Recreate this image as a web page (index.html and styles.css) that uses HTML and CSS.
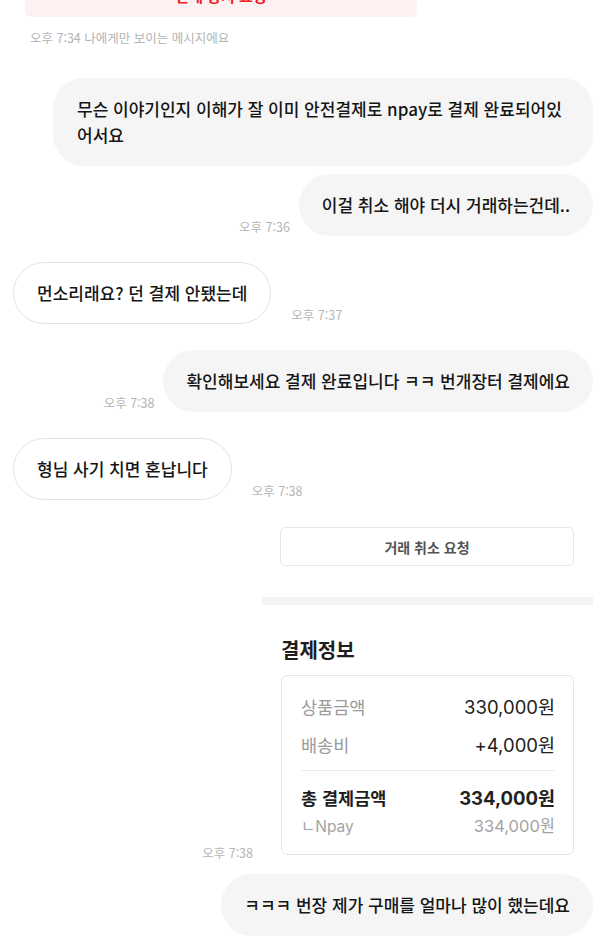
FILE: index.html
```html
<!DOCTYPE html>
<html lang="ko">
<head>
<meta charset="utf-8">
<title>채팅</title>
<link rel="stylesheet" href="styles.css">
</head>
<body>
<div class="chat">
  <div class="notice">
    <div class="notice-box"><p class="notice-text">판매 중지 요청</p></div>
    <div class="notice-meta">오후 7:34 나에게만 보이는 메시지에요</div>
  </div>

  <div class="row me first">
    <div class="bubble me-bubble wide">무슨 이야기인지 이해가 잘 이미 안전결제로 npay로 결제 완료되어있어서요</div>
  </div>

  <div class="row me same">
    <span class="time">오후 7:36</span>
    <div class="bubble me-bubble">이걸 취소 해야 더시 거래하는건데..</div>
  </div>

  <div class="row you">
    <div class="bubble you-bubble">먼소리래요? 던 결제 안됐는데</div>
    <span class="time">오후 7:37</span>
  </div>

  <div class="row me">
    <span class="time">오후 7:38</span>
    <div class="bubble me-bubble">확인해보세요 결제 완료입니다 ㅋㅋ 번개장터 결제에요</div>
  </div>

  <div class="row you">
    <div class="bubble you-bubble">형님 사기 치면 혼납니다</div>
    <span class="time">오후 7:38</span>
  </div>

  <div class="row me pay-row">
    <span class="time">오후 7:38</span>
    <div class="pay">
      <button class="cancel-btn" type="button">거래 취소 요청</button>
      <div class="pay-bar"></div>
      <h2 class="pay-title">결제정보</h2>
      <div class="pay-card">
        <div class="pay-line">
          <span class="pay-label">상품금액</span>
          <span class="pay-value">330,000원</span>
        </div>
        <div class="pay-line second">
          <span class="pay-label">배송비</span>
          <span class="pay-value">+4,000원</span>
        </div>
        <div class="pay-divider"></div>
        <div class="pay-line total">
          <span class="pay-label">총 결제금액</span>
          <span class="pay-value">334,000원</span>
        </div>
        <div class="pay-line sub">
          <span class="pay-label">ㄴNpay</span>
          <span class="pay-value">334,000원</span>
        </div>
      </div>
    </div>
  </div>

  <div class="row me last">
    <div class="bubble me-bubble">ㅋㅋㅋ 번장 제가 구매를 얼마나 많이 했는데요</div>
  </div>
</div>
</body>
</html>
```

FILE: styles.css
```css
html, body {
  margin: 0;
  padding: 0;
  background: #ffffff;
}

body {
  font-family: "Noto Sans CJK KR", "Noto Sans", sans-serif;
  color: #1a1a1a;
  overflow: hidden;
}

.chat {
  display: flex;
  flex-direction: column;
}

.notice {
  display: flex;
  flex-direction: column;
  padding-left: 25px;
}

.notice-box {
  width: 392px;
  margin-top: -32px;
  padding: 17px 0 10px;
  background: #fdf1f1;
  border-radius: 6px;
  text-align: center;
}

.notice-text {
  margin: 0;
  font-size: 15px;
  line-height: 22px;
  font-weight: 700;
  color: #ee1c25;
}

.notice-meta {
  margin-top: 13px;
  padding-left: 5px;
  font-size: 12.5px;
  line-height: 16px;
  color: #b3b3b3;
}

.row {
  display: flex;
  align-items: flex-end;
  margin-top: 26px;
}

.row.first {
  margin-top: 32px;
}

.row.same {
  margin-top: 8px;
}

.row.me {
  justify-content: flex-end;
  padding-right: 9px;
  gap: 9px;
}

.row.you {
  justify-content: flex-start;
  padding-left: 13px;
  gap: 20px;
}

.bubble {
  box-sizing: border-box;
  max-width: 540px;
  padding: 18px 23px;
  border-radius: 31px;
  font-size: 17px;
  line-height: 26px;
  font-weight: 500;
  color: #161616;
}

.bubble.wide {
  padding-left: 24px;
}

.me-bubble {
  background: #f5f5f5;
}

.you-bubble {
  background: #ffffff;
  border: 1px solid #e2e2e2;
  padding: 17px 23px;
}

.time {
  font-size: 12.5px;
  line-height: 16px;
  color: #b5b5b5;
  margin-bottom: 1px;
  white-space: nowrap;
}

.pay-row {
  margin-top: 27px;
  gap: 10px;
}

.pay {
  width: 331px;
  display: flex;
  flex-direction: column;
  padding-bottom: 7px;
}

.cancel-btn {
  margin: 0 19px 0 18px;
  height: 39px;
  border: 1px solid #e6e6e6;
  border-radius: 5px;
  background: #ffffff;
  font-family: "Noto Sans CJK KR", sans-serif;
  font-size: 14px;
  font-weight: 700;
  color: #555555;
  padding: 0;
}

.pay-bar {
  margin-top: 31px;
  height: 8px;
  background: #f4f4f4;
}

.pay-title {
  margin: 32px 0 0 19px;
  font-size: 20px;
  line-height: 26px;
  font-weight: 700;
  color: #1e1e1e;
}

.pay-card {
  margin: 12px 19px 0 19px;
  padding: 18px 18px 18px 19px;
  border: 1px solid #e5e5e5;
  border-radius: 6px;
  display: flex;
  flex-direction: column;
}

.pay-line {
  display: flex;
  justify-content: space-between;
  align-items: center;
  height: 24px;
}

.pay-line.second {
  margin-top: 14px;
}

.pay-label {
  font-size: 17.5px;
  color: #9a9a9a;
}

.pay-value {
  font-family: "Inter", "Noto Sans CJK KR", sans-serif;
  font-size: 18.5px;
  color: #222222;
}

.pay-divider {
  margin-top: 14px;
  height: 1px;
  background: #ececec;
}

.pay-line.total {
  margin-top: 14px;
}

.pay-line.total .pay-label {
  color: #1e1e1e;
  font-weight: 700;
  font-size: 17.5px;
}

.pay-line.total .pay-value {
  font-weight: 700;
}

.pay-line.sub {
  margin-top: 5px;
  height: 22px;
}

.pay-line.sub .pay-label {
  font-family: "Inter", "Noto Sans CJK KR", sans-serif;
  font-size: 15.5px;
  color: #a3a3a3;
}

.pay-line.sub .pay-value {
  font-size: 16.5px;
  color: #a3a3a3;
}

.row.last {
  margin-top: 12px;
}
```
